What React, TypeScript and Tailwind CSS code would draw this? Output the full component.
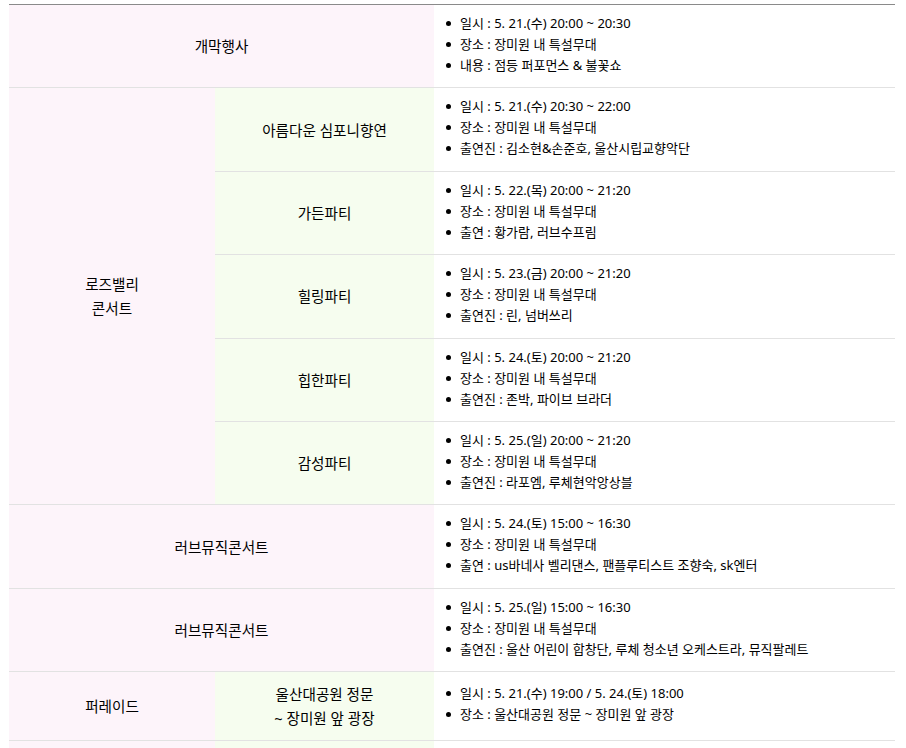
import React from "react";

type Item = string[];

const FONT = { fontFamily: '"Noto Sans", "Noto Sans CJK KR", sans-serif' };

function List({ items }: { items: Item }) {
  return (
    <ul className="pt-[8px] pb-[11.4px] pl-[12px] pr-2">
      {items.map((t, i) => (
        <li key={i} className="flex items-center gap-[9px] leading-[21px] text-[13px] text-black whitespace-nowrap">
          <span className="w-[5px] h-[5px] rounded-full bg-black shrink-0" />
          <span>{t}</span>
        </li>
      ))}
    </ul>
  );
}

const pink = "bg-[#fdf4fa]";
const green = "bg-[#f6fdef]";
const head = "text-center align-middle text-[14.6px] leading-[24px] text-black py-[10px] px-2";

export default function App() {
  const rose = [
    {
      name: "아름다운 심포니향연",
      items: ["일시 : 5. 21.(수) 20:30 ~ 22:00", "장소 : 장미원 내 특설무대", "출연진 : 김소현&손준호, 울산시립교향악단"],
    },
    {
      name: "가든파티",
      items: ["일시 : 5. 22.(목) 20:00 ~ 21:20", "장소 : 장미원 내 특설무대", "출연 : 황가람, 러브수프림"],
    },
    {
      name: "힐링파티",
      items: ["일시 : 5. 23.(금) 20:00 ~ 21:20", "장소 : 장미원 내 특설무대", "출연진 : 린, 넘버쓰리"],
    },
    {
      name: "힙한파티",
      items: ["일시 : 5. 24.(토) 20:00 ~ 21:20", "장소 : 장미원 내 특설무대", "출연진 : 존박, 파이브 브라더"],
    },
    {
      name: "감성파티",
      items: ["일시 : 5. 25.(일) 20:00 ~ 21:20", "장소 : 장미원 내 특설무대", "출연진 : 라포엠, 루체현악앙상블"],
    },
  ];
  return (
    <div className="bg-white min-h-[748px] pt-[4px] pl-[9px] pr-[11px]" style={FONT}>
      <table className="w-[886px] border-collapse table-fixed border-t border-t-[#8a8a8a]">
        <colgroup>
          <col className="w-[206px]" />
          <col className="w-[219px]" />
          <col className="w-[461px]" />
        </colgroup>
        <tbody>
          <tr className="border-b border-[#e2e2e2]">
            <td colSpan={2} className={`${pink} ${head}`}>개막행사</td>
            <td className="align-middle">
              <List items={["일시 : 5. 21.(수) 20:00 ~ 20:30", "장소 : 장미원 내 특설무대", "내용 : 점등 퍼포먼스 & 불꽃쇼"]} />
            </td>
          </tr>
          {rose.map((r, i) => (
            <tr key={r.name} className="border-b border-[#e2e2e2]">
              {i === 0 && (
                <td rowSpan={5} className={`${pink} ${head} border-b border-[#e2e2e2]`}>
                  로즈밸리
                  <br />
                  콘서트
                </td>
              )}
              <td className={`${green} ${head}`}>{r.name}</td>
              <td className="align-middle">
                <List items={r.items} />
              </td>
            </tr>
          ))}
          <tr className="border-b border-[#e2e2e2]">
            <td colSpan={2} className={`${pink} ${head}`}>러브뮤직콘서트</td>
            <td className="align-middle">
              <List items={["일시 : 5. 24.(토) 15:00 ~ 16:30", "장소 : 장미원 내 특설무대", "출연 : us바네사 벨리댄스, 팬플루티스트 조향숙, sk엔터"]} />
            </td>
          </tr>
          <tr className="border-b border-[#e2e2e2]">
            <td colSpan={2} className={`${pink} ${head}`}>러브뮤직콘서트</td>
            <td className="align-middle">
              <List items={["일시 : 5. 25.(일) 15:00 ~ 16:30", "장소 : 장미원 내 특설무대", "출연진 : 울산 어린이 합창단, 루체 청소년 오케스트라, 뮤직팔레트"]} />
            </td>
          </tr>
          <tr className="border-b border-[#e2e2e2]">
            <td className={`${pink} ${head}`}>퍼레이드</td>
            <td className={`${green} ${head}`}>
              울산대공원 정문
              <br />~ 장미원 앞 광장
            </td>
            <td className="align-middle">
              <List items={["일시 : 5. 21.(수) 19:00 / 5. 24.(토) 18:00", "장소 : 울산대공원 정문 ~ 장미원 앞 광장"]} />
            </td>
          </tr>
          <tr className="border-b border-[#e2e2e2]">
            <td className={`${pink} ${head}`}>체험행사</td>
            <td className={`${green} ${head}`}>장미 체험부스</td>
            <td className="align-middle">
              <List items={["일시 : 5. 21.(수) ~ 5. 25.(일)", "장소 : 장미원 일원", "내용 : 다양한 체험 프로그램"]} />
            </td>
          </tr>
        </tbody>
      </table>
    </div>
  );
}
